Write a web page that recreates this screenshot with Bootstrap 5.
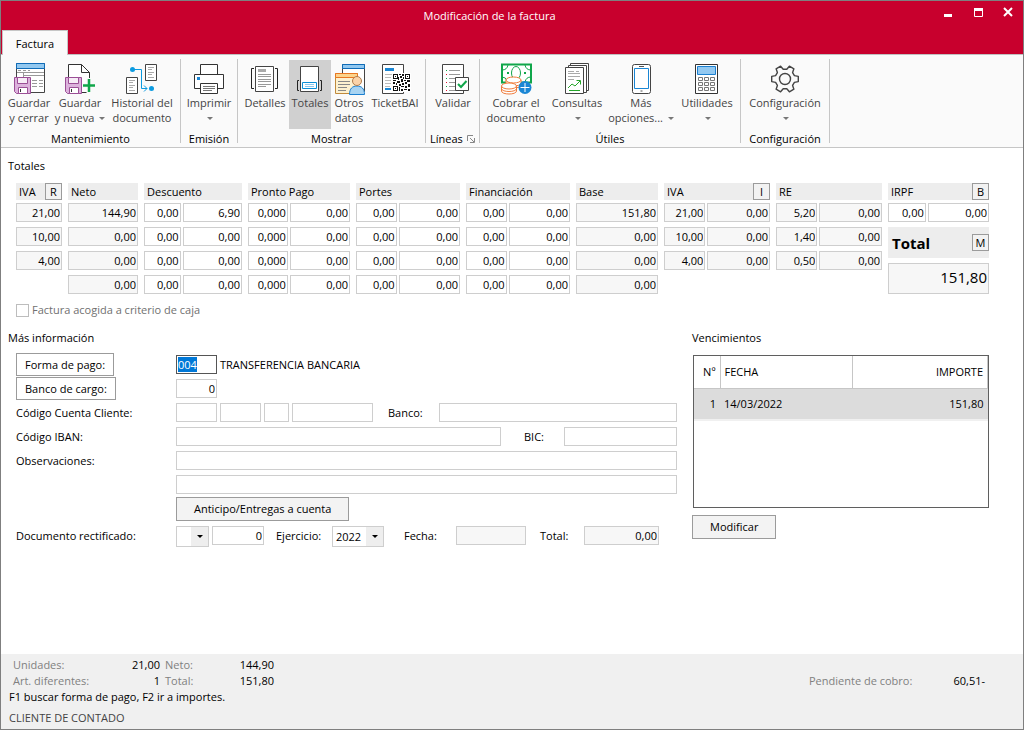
<!DOCTYPE html>
<html lang="es">
<head>
<meta charset="utf-8">
<meta name="viewport" content="width=device-width, initial-scale=1">
<title>Modificación de la factura</title>
<link href="https://cdn.jsdelivr.net/npm/bootstrap@5.3.0/dist/css/bootstrap.min.css" rel="stylesheet">
<style>
body{font:11px/16px "Open Sans","Noto Sans",sans-serif;color:#000;background:#fff}
.window{min-height:100vh;border:1px solid #7f7f7f}
.titlebar{background:#c8002d;color:#fff}
.title-row{height:29px}
.window-title{padding-left:39px;padding-top:6px;font-size:11px;line-height:18px}
.window-controls{padding:5px 6px 0 0}
.window-controls button{width:18px;height:14px;background:none;border:0;padding:0;color:#fff;display:flex;justify-content:center}
.window-controls svg{width:12px;height:12px}
.tab-link{display:block;background:#fafafa;color:#000;border:1px solid #c6c6c6;border-bottom:0;width:66px;height:25px;line-height:25px;text-align:center;text-decoration:none;margin:0 0 -1px 1px;z-index:1}
.ribbon{background:#fafafa;border-top:1px solid #c0c0c0;border-bottom:1px solid #c6c6c6;padding:4px 0}
.ribbon-group{border-right:1px solid #c6c6c6;height:84px;padding-top:1px}
.ribbon-group h2{font-size:11px;line-height:20px;margin:0;text-align:center}
.tools{display:flex;padding:0 2px 0 3px}
.tool{background:none;border:0;padding:3px 0 0;height:69px;color:#444;line-height:15px;white-space:nowrap;display:flex;flex-direction:column;align-items:center}
.tool.active{background:#d0d0d0}
.tool svg{width:32px;height:32px;flex:none}
.w-sm{width:36px}.w-md{width:42px}.w-det{width:48px}.w-std{width:50px}.w-lg{width:52px}.w-tk{width:56px}.w-con{width:58px}.w-ut{width:62px}.w-cob{width:64px}.w-mas{width:70px}.w-hist{width:72px}
.arrow-down{display:inline-block;border:3px solid transparent;border-top-color:#777;border-bottom:0;margin:0 0 1px 2px;vertical-align:middle}
.ico-d{fill:#fff;stroke:#444}
.section-title{font-size:11px;line-height:16px;margin:0}
.workspace{padding:10px 34px 0 7px}
.totals{display:grid;grid-template-columns:46fr 70fr 98fr 102fr 104fr 104fr 82fr 106fr 106fr 101fr;gap:6px;padding:9px 0 0 8px}
.tot-col{min-width:0;display:flex;flex-direction:column;gap:5px}
.tot-head{background:#ededed;height:17px;line-height:18px;padding-left:3px;margin-bottom:-2px;display:flex;justify-content:space-between}
.pair{display:grid;gap:2px;grid-template-columns:37fr 60fr}
.pair.wide{grid-template-columns:41fr 62fr}
.fld{width:100%;min-width:0;height:19px;border:1px solid #cecece;border-radius:0;padding:0 1px;background:#fff;color:#000;font:inherit;line-height:17px;outline:0}
.fld.num{text-align:right}
.fld[readonly]{background:#f7f7f7}
.key{width:17px;height:17px;border:1px solid #9b9b9b;background:#f2f2f2;padding:0;font:inherit;font-size:11px;line-height:14px}
.total-head{background:#ededed;height:31px;padding-left:4px;font-size:15px}
.total-value{height:31px;font-size:15px;padding-bottom:3px}
.cash-check{padding:8px 0 0 8px;color:#707070}
.cash-check .form-check-input{width:13px;height:13px;border-radius:0;border:1px solid #bdbdbd;margin:0 3px 0 0}
.lower{display:grid;grid-template-columns:669fr 297fr;gap:15px;padding-top:12px}
.form-area{padding:7px 0 0 8px}
.line{display:grid;grid-template-columns:160px 1fr;min-height:24px;line-height:24px}
.line .fld,.line .choice{margin-top:2px}
.line-fields{display:flex;gap:3px}
.btn-row{padding-bottom:3px}
.btn-flat{height:24px;border:1px solid #9b9b9b;background:#f3f3f3;font:inherit;line-height:22px;padding:0 17px}
.btn-flat.plain{background:#fff;justify-self:start;padding:0 8px;height:23px}
.f-25{width:25px}.f-33{width:33px}.f-41{width:41px}.f-44{width:44px}.f-52{width:52px}.f-56{width:56px}.f-70{width:70px}.f-75{width:75px}.f-81{width:81px}.f-113{width:113px}.f-325{width:325px}
.line-fields>*{flex:none}
.line-fields>.fld-fill{flex:1 1 0}
.gap-none{gap:0}
.after-3{margin-left:3px}.after-12{margin-left:12px}.after-14{margin-left:14px}.after-20{margin-left:20px}
.choice{height:21px;border:1px solid #cecece;border-radius:0;padding:0 0 0 3px;font:inherit;line-height:19px;appearance:none;background:#fff url("data:image/svg+xml,%3Csvg xmlns='http://www.w3.org/2000/svg' width='17' height='19'%3E%3Cpath fill='%23eee' d='M0 0h17v19H0z'/%3E%3Cpath d='M6 8h6L9 11z'/%3E%3C/svg%3E") no-repeat right center}
#forma{border-color:#555}
#forma::selection{background:#0078d7;color:#fff}
.due-box{border:1px solid #5f5f5f;min-height:153px;margin:9px 0 7px 1px}
.due-box table{width:100%}
.due-box th{font-weight:400;height:32px;border-right:1px solid #c6c6c6;border-bottom:1px solid #c6c6c6;padding:0 4px}
.due-box td{background:#dcdcdc;height:32px;border-bottom:2px solid #f0f0f0;padding:0 4px}
.col-num{width:26px}.col-date{width:45%}
.statusbar{background:#f0f0f0;padding:3px 38px 3px 8px}
.statusbar .mute{color:#808080}
.sums{display:grid;grid-template-columns:92px 55px 58px 56px;padding-left:4px}
.sums .next-label{padding-left:5px}
.pending{width:176px}
.customer{padding-top:5px;color:#444}
</style>
</head>
<body>
<div class="window d-flex flex-column">
<header class="titlebar">
  <div class="title-row d-flex align-items-start">
    <h1 class="window-title flex-grow-1 text-center m-0">Modificación de la factura</h1>
    <div class="window-controls d-flex gap-2">
      <button aria-label="Minimizar"><svg viewBox="0 0 12 12"><path d="M2 8h8v3H2z" fill="#fff"/></svg></button>
      <button class="mx-1" aria-label="Maximizar"><svg viewBox="0 0 12 12"><path d="M2.500 2.500h8v8h-8z" fill="none" stroke="#fff"/><path d="M2 2h9v3H2z" fill="#fff"/></svg></button>
      <button aria-label="Cerrar"><svg viewBox="0 0 12 12"><path d="M2 2l8 8M10 2l-8 8" stroke="#fff" stroke-width="2"/></svg></button>
    </div>
  </div>
  <nav class="d-flex"><a class="tab-link position-relative" href="#">Factura</a></nav>
</header>

<div class="ribbon d-flex" role="toolbar">
  <section class="ribbon-group">
    <div class="tools">
      <button class="tool w-std"><svg viewBox="0 0 32 32"><path class="ico-d" d="M3.500 .5h28v29h-28z"/><path d="M3.500 .5h28v5h-28z" fill="#92c8f0" stroke="#0f6cb8"/><path d="M5 7.500h3m2 0h3m2 0h2M4 9.500h27M10.500 10v5M11 12.500h20M19 17.500h5m2 0h4M19 20.500h5m2 0h4M19 23.500h5m2 0h4" stroke="#999" fill="none"/><path d="M1.500 14.500h16v16h-14l-2-2z" fill="#dcb2dc" stroke="#9b4f96"/><path d="M4.500 14.500h10v6h-10z" fill="#f6ecf6" stroke="#9b4f96"/><path d="M5.500 24.500h9v6h-9z" fill="#fff" stroke="#9b4f96"/><path d="M7.500 26v3" stroke="#333"/></svg><span>Guardar<br>y cerrar</span></button>
      <button class="tool w-lg"><svg viewBox="0 0 32 32"><path class="ico-d" d="M4.500 1.500h13l8 8v20h-21z" style="stroke:#333"/><path d="M17.500 1.500v8h8" fill="none" stroke="#333"/><path d="M1.500 14.500h16v16h-14l-2-2z" fill="#dcb2dc" stroke="#9b4f96"/><path d="M4.500 14.500h10v6h-10z" fill="#f6ecf6" stroke="#9b4f96"/><path d="M5.500 24.500h9v6h-9z" fill="#fff" stroke="#9b4f96"/><path d="M7.500 26v3" stroke="#333"/><path d="M25 15v15M18.500 22.500h13" stroke="#fafafa" stroke-width="5"/><path d="M25 16v13M19 22.500h12" stroke="#10a64a" stroke-width="2.500"/></svg><span>Guardar<br>y nueva <i class="arrow-down"></i></span></button>
      <button class="tool w-hist"><svg viewBox="0 0 32 32"><path class="ico-d" d="M19.500 1.500h11v16h-11zM.5 14.500h11v16H.5z"/><path d="M22 4.500h6M22 6.500h4M22 9.500h6M22 11.500h4M22 14.500h6M3 17.500h6M3 19.500h4M3 22.500h6M3 24.500h4M3 27.500h6" stroke="#aaa"/><path d="M6 6.500h9.500v19H21M18 22.500l3 3-3 3" fill="none" stroke="#0c9be0"/><circle cx="6.500" cy="6.500" r="2.500" fill="#0c9be0"/><circle cx="25.500" cy="25.500" r="2.500" fill="#0c9be0"/></svg><span>Historial del<br>documento</span></button>
    </div><h2>Mantenimiento</h2>
  </section>
  <section class="ribbon-group">
    <div class="d-flex px-1">
      <button class="tool w-det"><svg viewBox="0 0 32 32"><g class="ico-d" style="stroke:#333"><path d="M7.500 12V1.500h17V12"/><path d="M1.500 11.500h29v14h-29z"/><path d="M7.500 20.500h17v10h-17z"/></g><path d="M10 23.500h12M10 25.500h12M10 27.500h9" stroke="#777"/><path d="M4 14h3v3H4z" fill="#1a86d4"/></svg><span>Imprimir<br><i class="arrow-down"></i></span></button>
    </div><h2>Emisión</h2>
  </section>
  <section class="ribbon-group">
    <div class="tools">
      <button class="tool w-det"><svg viewBox="0 0 32 32"><path class="ico-d" d="M6.500 3.500h18v25h-18z"/><path d="M5 5.500H2.500v20H5M26 5.500h2.500v20H26" fill="none" stroke="#222"/><path d="M9 6h8v3H9z" fill="#aaa"/><path d="M9 11.500h13M9 13.500h13M9 16.500h13M9 18.500h13M9 21.500h13M9 23.500h8" stroke="#999"/></svg><span>Detalles</span></button>
      <button class="tool w-md active" aria-pressed="true"><svg viewBox="0 0 32 32"><path class="ico-d" d="M6.500 3.500h18v25h-18z"/><path d="M5 17.500H3.500v10H5M26 17.500h1.500v10H26" fill="none" stroke="#222"/><path d="M8.500 19.500h14v6h-14z" fill="#fff" stroke="#0c8fd6"/><path d="M11 21.500h9M11 23.500h9" stroke="#8cc8ec"/></svg><span>Totales</span></button>
      <button class="tool w-sm"><svg viewBox="0 0 32 32"><path class="ico-d" d="M9.500 1.500h22v27h-22z"/><path d="M9.500 1.500h22v4h-22z" fill="#92c8f0" stroke="#0f6cb8"/><path d="M2.500 10.500h22v20h-22z" fill="#fdf1cf" stroke="#c08a3c"/><path d="M2.500 10.500h22v4h-22z" fill="#fcd48c" stroke="#e87722"/><path d="M5 18.500h12M5 21.500h12M5 24.500h9M5 27.500h8" stroke="#888"/><path d="M16.500 31.500c0-6 3-8.500 7.500-8.500s7.500 2.500 7.500 8.500z" fill="#a8d4f2" stroke="#1a7fd0"/><circle cx="24" cy="18" r="4.500" fill="#fbd3a8" stroke="#b07c4c"/></svg><span>Otros<br>datos</span></button>
      <button class="tool w-tk"><svg viewBox="0 0 32 32"><path class="ico-d" d="M3.500 1.500h21v29h-21z"/><path d="M6 5h9v3H6zM6 25h6v2H6z" fill="#1a86d4"/><path d="M6 11.500h8M6 14.500h6M6 17.500h6M6 20.500h6M6 23.500h5" stroke="#bbb"/><path d="M13 10h19v19H13z" fill="#fff"/><g shape-rendering="crispEdges"><path d="M14.500 11.500h4v4h-4zM26.500 11.500h4v4h-4zM14.500 23.500h4v4h-4z" fill="none" stroke="#111"/><path d="M16 13h1v1h-1zM28 13h1v1h-1zM16 25h1v1h-1zM20 11h2v1h-2zM23 11h2v2h-2zM21 13h2v2h-2zM24 14h1v2h-1zM19 14h1v3h-1zM14 17h3v1h-3zM18 18h3v2h-3zM22 16h2v3h-2zM25 17h2v1h-2zM28 17h3v2h-3zM26 19h2v2h-2zM14 19h2v2h-2zM20 21h2v2h-2zM23 20h2v2h-2zM29 21h2v3h-2zM20 24h1v4h-1zM22 23h3v1h-3zM26 23h2v2h-2zM22 26h2v2h-2zM25 26h3v1h-3zM29 26h2v2h-2zM17 20h1v2h-1z" fill="#111"/></g></svg><span>TicketBAI</span></button>
    </div><h2>Mostrar</h2>
  </section>
  <section class="ribbon-group">
    <div class="tools">
      <button class="tool w-det"><svg viewBox="0 0 32 32"><path class="ico-d" d="M5.500 1.500h21v29h-21z"/><path d="M12 7.500h11M12 11.500h11M12 15.500h6M12 19.500h6M12 23.500h6M12 27.500h8" stroke="#999"/><path d="M9 7h1v1H9zM9 15h1v1H9zM9 23h1v1H9z" fill="#10a64a" /><path d="M9 11h1v1H9zM9 19h1v1H9zM9 27h1v1H9z" fill="#e01030"/><path class="ico-d" d="M18.500 14.500h13v13h-13z"/><path d="M21 21l3 3 5.500-6" fill="none" stroke="#10a64a" stroke-width="2"/></svg><span>Validar</span></button>
    </div>
    <h2 class="d-flex align-items-center justify-content-between px-1">Líneas <svg width="8" height="8" viewBox="0 0 8 8"><path d="M.5 6V.5H6M3 3l4 4M7.500 3v4.500H3" fill="none" stroke="#888"/></svg></h2>
  </section>
  <section class="ribbon-group">
    <div class="tools ps-1">
      <button class="tool w-cob"><svg viewBox="0 0 32 32"><path d="M2 1.500h29v18H2z" fill="#fff" stroke="#10a64a" stroke-width="2"/><path d="M2 7q5 0 6-5M31 7q-5 0-6-5M31 14q-5 0-6 5M2 14q4 0 5 4" fill="none" stroke="#10a64a"/><ellipse cx="16" cy="10" rx="4.500" ry="6.500" fill="#fff" stroke="#10a64a"/><path d="M7 9h2v2H7zM24 9h2v2h-2z" fill="#10a64a"/><g fill="#fff" stroke="#f07c3c"><path d="M6 17v5c0 4 15 4 15 0v-5"/><ellipse cx="13.500" cy="17" rx="7.500" ry="3"/><path d="M6 20c0 4 15 4 15 0" fill="none"/><path d="M1.500 23v5c0 4 15 4 15 0v-5"/><ellipse cx="9" cy="23" rx="7.500" ry="3"/><path d="M1.500 25.500c0 4 15 4 15 0" fill="none"/></g><circle cx="25" cy="24.500" r="6.500" fill="#1a86d4"/><path d="M25 20v9M20.500 24.500h9" stroke="#fff"/></svg><span>Cobrar el<br>documento</span></button>
      <button class="tool w-con"><svg viewBox="0 0 32 32"><g class="ico-d"><path d="M9.500 .5h18v27h-18z"/><path d="M7.500 2.500h18v27h-18z"/><path d="M4.500 4.500h18v26h-18z"/></g><path d="M7 8.500h6M15 8.500h3M7 10.500h12M7 13.500h12M7 16.500h6" stroke="#aaa"/><path d="M7 25l4-4 3 2 5-5M15.500 17.500h4v4M8 27.500h11" fill="none" stroke="#25a52a"/></svg><span>Consultas<br><i class="arrow-down"></i></span></button>
      <button class="tool w-mas"><svg viewBox="0 0 32 32"><rect class="ico-d" x="7.500" y="1.500" width="18" height="29" rx="2"/><path d="M9.500 5.500h14v20h-14z" fill="#fff" stroke="#1a86d4"/><path d="M14 3.500h5M15.500 28h2" stroke="#555"/></svg><span>Más<br>opciones... <i class="arrow-down"></i></span></button>
      <button class="tool w-ut"><svg viewBox="0 0 32 32"><path class="ico-d" style="stroke:#333" d="M4.500 1.500h22v29h-22z"/><path d="M6.500 3.500h18v8h-18z" fill="#92c8f0" stroke="#1a7fd0"/><path d="M7.500 14.500h4v3h-4zM13.500 14.500h4v3h-4zM19.500 14.500h4v3h-4zM7.500 19.500h4v3h-4zM13.500 19.500h4v3h-4zM19.500 19.500h4v3h-4zM7.500 24.500h4v3h-4zM13.500 24.500h4v3h-4zM19.500 24.500h4v3h-4z" fill="#fff" stroke="#777"/></svg><span>Utilidades<br><i class="arrow-down"></i></span></button>
    </div><h2>Útiles</h2>
  </section>
  <section class="ribbon-group px-2">
    <div class="d-flex">
      <button class="tool w-hist"><svg viewBox="0 0 32 32"><g transform="translate(16 16)" fill="none" stroke="#444" stroke-width="1.400" stroke-linejoin="round"><path d="M9.400-3.400 13.300-2.600 13.300 2.600 9.400 3.400 7.600 6.400 8.900 10.200 4.400 12.800 1.800 9.800-1.800 9.800-4.400 12.800-8.900 10.200-7.600 6.400-9.400 3.400-13.300 2.600-13.300-2.600-9.400-3.400-7.600-6.400-8.900-10.200-4.400-12.800-1.800-9.800 1.800-9.800 4.400-12.800 8.900-10.200 7.600-6.400z"/><circle r="5.500"/></g></svg><span>Configuración<br><i class="arrow-down"></i></span></button>
    </div><h2>Configuración</h2>
  </section>
</div>

<main class="workspace flex-grow-1">
  <h2 class="section-title">Totales</h2>
  <div class="totals">
    <div class="tot-col"><div class="tot-head">IVA <button class="key">R</button></div>
      <input class="fld num" readonly aria-label="IVA 1" value="21,00"><input class="fld num" readonly aria-label="IVA 2" value="10,00"><input class="fld num" readonly aria-label="IVA 3" value="4,00"></div>
    <div class="tot-col"><div class="tot-head">Neto</div>
      <input class="fld num" readonly aria-label="Neto 1" value="144,90"><input class="fld num" readonly aria-label="Neto 2" value="0,00"><input class="fld num" readonly aria-label="Neto 3" value="0,00"><input class="fld num" readonly aria-label="Neto 4" value="0,00"></div>
    <div class="tot-col"><div class="tot-head">Descuento</div>
      <div class="pair"><input class="fld num" aria-label="Descuento % 1" value="0,00"><input class="fld num" aria-label="Descuento 1" value="6,90"></div>
      <div class="pair"><input class="fld num" aria-label="Descuento % 2" value="0,00"><input class="fld num" aria-label="Descuento 2" value="0,00"></div>
      <div class="pair"><input class="fld num" aria-label="Descuento % 3" value="0,00"><input class="fld num" aria-label="Descuento 3" value="0,00"></div>
      <div class="pair"><input class="fld num" aria-label="Descuento % 4" value="0,00"><input class="fld num" aria-label="Descuento 4" value="0,00"></div></div>
    <div class="tot-col"><div class="tot-head">Pronto Pago</div>
      <div class="pair wide"><input class="fld num" aria-label="Pronto pago % 1" value="0,000"><input class="fld num" aria-label="Pronto pago 1" value="0,00"></div>
      <div class="pair wide"><input class="fld num" aria-label="Pronto pago % 2" value="0,000"><input class="fld num" aria-label="Pronto pago 2" value="0,00"></div>
      <div class="pair wide"><input class="fld num" aria-label="Pronto pago % 3" value="0,000"><input class="fld num" aria-label="Pronto pago 3" value="0,00"></div>
      <div class="pair wide"><input class="fld num" aria-label="Pronto pago % 4" value="0,000"><input class="fld num" aria-label="Pronto pago 4" value="0,00"></div></div>
    <div class="tot-col"><div class="tot-head">Portes</div>
      <div class="pair wide"><input class="fld num" aria-label="Portes % 1" value="0,00"><input class="fld num" aria-label="Portes 1" value="0,00"></div>
      <div class="pair wide"><input class="fld num" aria-label="Portes % 2" value="0,00"><input class="fld num" aria-label="Portes 2" value="0,00"></div>
      <div class="pair wide"><input class="fld num" aria-label="Portes % 3" value="0,00"><input class="fld num" aria-label="Portes 3" value="0,00"></div>
      <div class="pair wide"><input class="fld num" aria-label="Portes % 4" value="0,00"><input class="fld num" aria-label="Portes 4" value="0,00"></div></div>
    <div class="tot-col"><div class="tot-head">Financiación</div>
      <div class="pair wide"><input class="fld num" aria-label="Financiación % 1" value="0,00"><input class="fld num" aria-label="Financiación 1" value="0,00"></div>
      <div class="pair wide"><input class="fld num" aria-label="Financiación % 2" value="0,00"><input class="fld num" aria-label="Financiación 2" value="0,00"></div>
      <div class="pair wide"><input class="fld num" aria-label="Financiación % 3" value="0,00"><input class="fld num" aria-label="Financiación 3" value="0,00"></div>
      <div class="pair wide"><input class="fld num" aria-label="Financiación % 4" value="0,00"><input class="fld num" aria-label="Financiación 4" value="0,00"></div></div>
    <div class="tot-col"><div class="tot-head">Base</div>
      <input class="fld num" readonly aria-label="Base 1" value="151,80"><input class="fld num" readonly aria-label="Base 2" value="0,00"><input class="fld num" readonly aria-label="Base 3" value="0,00"><input class="fld num" readonly aria-label="Base 4" value="0,00"></div>
    <div class="tot-col"><div class="tot-head">IVA <button class="key">I</button></div>
      <div class="pair wide"><input class="fld num" readonly aria-label="Tipo IVA 1" value="21,00"><input class="fld num" readonly aria-label="Cuota IVA 1" value="0,00"></div>
      <div class="pair wide"><input class="fld num" readonly aria-label="Tipo IVA 2" value="10,00"><input class="fld num" readonly aria-label="Cuota IVA 2" value="0,00"></div>
      <div class="pair wide"><input class="fld num" readonly aria-label="Tipo IVA 3" value="4,00"><input class="fld num" readonly aria-label="Cuota IVA 3" value="0,00"></div></div>
    <div class="tot-col"><div class="tot-head">RE</div>
      <div class="pair wide"><input class="fld num" readonly aria-label="Tipo RE 1" value="5,20"><input class="fld num" readonly aria-label="Cuota RE 1" value="0,00"></div>
      <div class="pair wide"><input class="fld num" readonly aria-label="Tipo RE 2" value="1,40"><input class="fld num" readonly aria-label="Cuota RE 2" value="0,00"></div>
      <div class="pair wide"><input class="fld num" readonly aria-label="Tipo RE 3" value="0,50"><input class="fld num" readonly aria-label="Cuota RE 3" value="0,00"></div></div>
    <div class="tot-col"><div class="tot-head">IRPF <button class="key">B</button></div>
      <div class="pair"><input class="fld num" aria-label="IRPF %" value="0,00"><input class="fld num" aria-label="IRPF" value="0,00"></div>
      <div class="total-head d-flex align-items-center justify-content-between"><label class="fw-bold" for="total">Total</label> <button class="key">M</button></div>
      <input class="fld num total-value" id="total" readonly value="151,80"></div>
  </div>
  <div class="cash-check d-flex align-items-center"><input class="form-check-input" type="checkbox" id="caja"><label for="caja">Factura acogida a criterio de caja</label></div>

  <div class="lower">
    <section>
      <h2 class="section-title">Más información</h2>
      <div class="form-area">
        <div class="line"><button class="btn-flat plain">Forma de pago:</button><div class="line-fields"><input class="fld f-41" id="forma" aria-label="Forma de pago" value="004"><span>TRANSFERENCIA BANCARIA</span></div></div>
        <div class="line"><button class="btn-flat plain">Banco de cargo:</button><div class="line-fields"><input class="fld num f-41" aria-label="Banco de cargo" value="0"></div></div>
        <div class="line"><label for="ccc1">Código Cuenta Cliente:</label><div class="line-fields"><input class="fld f-41" id="ccc1"><input class="fld f-41" aria-label="Oficina"><input class="fld f-25" aria-label="DC"><input class="fld f-81" aria-label="Cuenta"><label class="after-12 f-44 me-1" for="banco">Banco:</label><input class="fld fld-fill" id="banco"></div></div>
        <div class="line"><label for="iban">Código IBAN:</label><div class="line-fields"><input class="fld f-325" id="iban"><label class="after-20 fld-fill" for="bic">BIC:</label><input class="fld f-113" id="bic"></div></div>
        <div class="line"><label for="obs">Observaciones:</label><input class="fld" id="obs"></div>
        <div class="line"><span></span><input class="fld" aria-label="Observaciones 2"></div>
        <div class="line btn-row"><span></span><div class="line-fields"><button class="btn-flat">Anticipo/Entregas a cuenta</button></div></div>
        <div class="line"><label for="doc">Documento rectificado:</label><div class="line-fields gap-none"><select class="choice f-33" id="doc"><option></option></select><input class="fld num f-52 after-3" aria-label="Número" value="0"><label class="after-12 f-56" for="ejer">Ejercicio:</label><select class="choice f-52" id="ejer"><option>2022</option></select><label class="f-52 after-20" for="fecha">Fecha:</label><input class="fld f-70" id="fecha" readonly><label class="f-44 after-14" for="tot2">Total:</label><input class="fld num f-75" id="tot2" readonly value="0,00"></div></div>
      </div>
    </section>
    <section>
      <h2 class="section-title">Vencimientos</h2>
      <div class="due-box">
        <table><colgroup><col class="col-num"><col class="col-date"><col></colgroup>
          <thead><tr><th class="text-end">Nº</th><th>FECHA</th><th class="text-end">IMPORTE</th></tr></thead>
          <tbody><tr><td class="text-end">1</td><td>14/03/2022</td><td class="text-end">151,80</td></tr></tbody></table>
      </div>
      <button class="btn-flat">Modificar</button>
    </section>
  </div>
</main>

<footer class="statusbar">
  <div class="d-flex justify-content-between align-items-end">
    <div class="sums">
      <span class="mute">Unidades:</span><span class="text-end">21,00</span><span class="mute next-label">Neto:</span><span class="text-end">144,90</span>
      <span class="mute">Art. diferentes:</span><span class="text-end">1</span><span class="mute next-label">Total:</span><span class="text-end">151,80</span>
    </div>
    <div class="pending d-flex justify-content-between"><span class="mute">Pendiente de cobro:</span><span>60,51-</span></div>
  </div>
  <div>F1 buscar forma de pago, F2 ir a importes.</div>
  <div class="customer">CLIENTE DE CONTADO</div>
</footer>
</div>
<script src="https://cdn.jsdelivr.net/npm/bootstrap@5.3.0/dist/js/bootstrap.bundle.min.js"></script>
<script>document.getElementById('forma').select();</script>
</body>
</html>
